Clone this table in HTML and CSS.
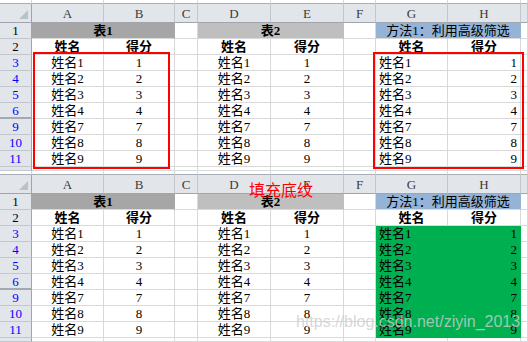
FILE: index.html
```html
<!DOCTYPE html>
<html lang="zh">
<head>
<meta charset="utf-8">
<link rel="stylesheet" href="styles.css">
</head>
<body>
<div class="shot">
  <div class="row strip"><div class="cell"></div><div class="cell"></div><div class="cell"></div><div class="cell"></div><div class="cell"></div><div class="cell"></div><div class="cell"></div><div class="cell"></div><div class="cell"></div><div class="cell"></div></div>
  <div class="row head">
    <div class="cell corner"><svg width="9" height="9" viewBox="0 0 9 9"><polygon points="9,0 9,9 0,9" fill="#bcc1c8"/></svg></div>
    <div class="cell ch">A</div><div class="cell ch">B</div><div class="cell ch">C</div><div class="cell ch">D</div><div class="cell ch">E</div><div class="cell ch">F</div><div class="cell ch">G</div><div class="cell ch">H</div><div class="cell ch"></div>
  </div>
  <div class="row data">
    <div class="cell rh">1</div>
    <div class="cell span2 t1 b">表1</div><div class="cell"></div>
    <div class="cell span2 t2 b">表2</div><div class="cell"></div>
    <div class="cell span2 t3">方法1：利用高级筛选</div><div class="cell"></div>
  </div>
  <div class="row data">
    <div class="cell rh">2</div>
    <div class="cell ctr b">姓名</div><div class="cell ctr b">得分</div><div class="cell"></div>
    <div class="cell ctr b">姓名</div><div class="cell ctr b">得分</div><div class="cell"></div>
    <div class="cell ctr b">姓名</div><div class="cell ctr b">得分</div><div class="cell"></div>
  </div>
  <div class="row data"><div class="cell rh f">3</div><div class="cell ctr">姓名1</div><div class="cell ctr">1</div><div class="cell"></div><div class="cell ctr">姓名1</div><div class="cell ctr">1</div><div class="cell"></div><div class="cell lft">姓名1</div><div class="cell rgt">1</div><div class="cell"></div></div>
  <div class="row data"><div class="cell rh f">4</div><div class="cell ctr">姓名2</div><div class="cell ctr">2</div><div class="cell"></div><div class="cell ctr">姓名2</div><div class="cell ctr">2</div><div class="cell"></div><div class="cell lft">姓名2</div><div class="cell rgt">2</div><div class="cell"></div></div>
  <div class="row data"><div class="cell rh f">5</div><div class="cell ctr">姓名3</div><div class="cell ctr">3</div><div class="cell"></div><div class="cell ctr">姓名3</div><div class="cell ctr">3</div><div class="cell"></div><div class="cell lft">姓名3</div><div class="cell rgt">3</div><div class="cell"></div></div>
  <div class="row data"><div class="cell rh f hid">6</div><div class="cell ctr">姓名4</div><div class="cell ctr">4</div><div class="cell"></div><div class="cell ctr">姓名4</div><div class="cell ctr">4</div><div class="cell"></div><div class="cell lft">姓名4</div><div class="cell rgt">4</div><div class="cell"></div></div>
  <div class="row data"><div class="cell rh f">9</div><div class="cell ctr">姓名7</div><div class="cell ctr">7</div><div class="cell"></div><div class="cell ctr">姓名7</div><div class="cell ctr">7</div><div class="cell"></div><div class="cell lft">姓名7</div><div class="cell rgt">7</div><div class="cell"></div></div>
  <div class="row data"><div class="cell rh f">10</div><div class="cell ctr">姓名8</div><div class="cell ctr">8</div><div class="cell"></div><div class="cell ctr">姓名8</div><div class="cell ctr">8</div><div class="cell"></div><div class="cell lft">姓名8</div><div class="cell rgt">8</div><div class="cell"></div></div>
  <div class="row data"><div class="cell rh f">11</div><div class="cell ctr">姓名9</div><div class="cell ctr">9</div><div class="cell"></div><div class="cell ctr">姓名9</div><div class="cell ctr">9</div><div class="cell"></div><div class="cell lft">姓名9</div><div class="cell rgt">9</div><div class="cell"></div></div>
  <div class="row tail"><div class="cell rh"></div><div class="cell"></div><div class="cell"></div><div class="cell"></div><div class="cell"></div><div class="cell"></div><div class="cell"></div><div class="cell"></div><div class="cell"></div><div class="cell"></div></div>
  <div class="mark mark-ab"></div>
  <div class="mark mark-gh"></div>
</div>

<div class="shot">
  <div class="row strip"><div class="cell"></div><div class="cell"></div><div class="cell"></div><div class="cell"></div><div class="cell"></div><div class="cell"></div><div class="cell"></div><div class="cell"></div><div class="cell"></div><div class="cell"></div></div>
  <div class="row head">
    <div class="cell corner"><svg width="9" height="9" viewBox="0 0 9 9"><polygon points="9,0 9,9 0,9" fill="#bcc1c8"/></svg></div>
    <div class="cell ch">A</div><div class="cell ch">B</div><div class="cell ch">C</div><div class="cell ch">D</div><div class="cell ch">E</div><div class="cell ch">F</div><div class="cell ch">G</div><div class="cell ch">H</div><div class="cell ch"></div>
  </div>
  <div class="row data">
    <div class="cell rh">1</div>
    <div class="cell span2 t1 b">表1</div><div class="cell"></div>
    <div class="cell span2 t2 b">表2</div><div class="cell"></div>
    <div class="cell span2 t3">方法1：利用高级筛选</div><div class="cell"></div>
  </div>
  <div class="row data">
    <div class="cell rh">2</div>
    <div class="cell ctr b">姓名</div><div class="cell ctr b">得分</div><div class="cell"></div>
    <div class="cell ctr b">姓名</div><div class="cell ctr b">得分</div><div class="cell"></div>
    <div class="cell ctr b">姓名</div><div class="cell ctr b">得分</div><div class="cell"></div>
  </div>
  <div class="row data"><div class="cell rh f">3</div><div class="cell ctr">姓名1</div><div class="cell ctr">1</div><div class="cell"></div><div class="cell ctr">姓名1</div><div class="cell ctr">1</div><div class="cell"></div><div class="cell lft grn">姓名1</div><div class="cell rgt grn">1</div><div class="cell"></div></div>
  <div class="row data"><div class="cell rh f">4</div><div class="cell ctr">姓名2</div><div class="cell ctr">2</div><div class="cell"></div><div class="cell ctr">姓名2</div><div class="cell ctr">2</div><div class="cell"></div><div class="cell lft grn">姓名2</div><div class="cell rgt grn">2</div><div class="cell"></div></div>
  <div class="row data"><div class="cell rh f">5</div><div class="cell ctr">姓名3</div><div class="cell ctr">3</div><div class="cell"></div><div class="cell ctr">姓名3</div><div class="cell ctr">3</div><div class="cell"></div><div class="cell lft grn">姓名3</div><div class="cell rgt grn">3</div><div class="cell"></div></div>
  <div class="row data"><div class="cell rh f hid">6</div><div class="cell ctr">姓名4</div><div class="cell ctr">4</div><div class="cell"></div><div class="cell ctr">姓名4</div><div class="cell ctr">4</div><div class="cell"></div><div class="cell lft grn">姓名4</div><div class="cell rgt grn">4</div><div class="cell"></div></div>
  <div class="row data"><div class="cell rh f">9</div><div class="cell ctr">姓名7</div><div class="cell ctr">7</div><div class="cell"></div><div class="cell ctr">姓名7</div><div class="cell ctr">7</div><div class="cell"></div><div class="cell lft grn">姓名7</div><div class="cell rgt grn">7</div><div class="cell"></div></div>
  <div class="row data"><div class="cell rh f">10</div><div class="cell ctr">姓名8</div><div class="cell ctr">8</div><div class="cell"></div><div class="cell ctr">姓名8</div><div class="cell ctr">8</div><div class="cell"></div><div class="cell lft grn">姓名8</div><div class="cell rgt grn">8</div><div class="cell"></div></div>
  <div class="row data"><div class="cell rh f">11</div><div class="cell ctr">姓名9</div><div class="cell ctr">9</div><div class="cell"></div><div class="cell ctr">姓名9</div><div class="cell ctr">9</div><div class="cell"></div><div class="cell lft grn">姓名9</div><div class="cell rgt grn">9</div><div class="cell"></div></div>
  <div class="row tail"><div class="cell rh"></div><div class="cell"></div><div class="cell"></div><div class="cell"></div><div class="cell"></div><div class="cell"></div><div class="cell"></div><div class="cell"></div><div class="cell"></div><div class="cell"></div></div>
  <div class="note">填充底纹</div>
  <div class="watermark">https://blog.csdn.net/ziyin_2013</div>
</div>
</body>
</html>
```

FILE: styles.css
```css
html, body {
  margin: 0;
  padding: 0;
  background: #ffffff;
}
body {
  width: 528px;
  height: 342px;
  overflow: hidden;
  font-family: "Liberation Serif", "Noto Sans CJK SC", serif;
  font-size: 13px;
  color: #000;
}
.shot {
  position: relative;
  height: 171px;
  overflow: hidden;
}
.row {
  display: grid;
  grid-template-columns: 32px 72px 71px 23px 73px 73px 32px 72px 73px 7px;
}
.strip { height: 4px; }
.head { height: 19px; }
.data { height: 16px; }
.tail { height: 4px; }

.cell {
  box-sizing: border-box;
  border-right: 1px solid #d9d9d9;
  border-bottom: 1px solid #d9d9d9;
  line-height: 16px;
  white-space: nowrap;
  overflow: hidden;
}
.strip .cell {
  border-bottom-color: #a9afb7;
}
.corner {
  background: #e2e6eb;
  border-right-color: #9ea5ae;
  border-bottom-color: #9ea5ae;
  display: flex;
  justify-content: flex-end;
  align-items: flex-end;
  padding: 0 3px 3px 0;
}
.ch {
  background: #e2e6eb;
  border-right-color: #c2c7ce;
  border-bottom-color: #9ea5ae;
  text-align: center;
  line-height: 20px;
  color: #3a3a3a;
}
.rh {
  background: #e2e6eb;
  border-right-color: #9ea5ae;
  border-bottom-color: #c2c7ce;
  text-align: center;
  line-height: 16px;
}
.rh.f { color: #0000ff; }
.rh.hid { border-bottom: 2px solid #a3a9b1; }

.span2 { grid-column: span 2; text-align: center; }
.t1 { background: #a6a6a6; border-right-color: #a6a6a6; }
.t2 { background: #bfbfbf; border-right-color: #bfbfbf; }
.t3 { background: #95b3d7; border-right-color: #95b3d7; }
.b { font-weight: bold; }
.ctr { text-align: center; }
.lft { text-align: left; padding-left: 3px; }
.rgt { text-align: right; padding-right: 3px; }
.grn {
  background: #00b050;
  border-color: #00b050;
}

.mark {
  position: absolute;
  top: 52px;
  height: 117px;
  box-sizing: border-box;
  border: 2px solid #ff0000;
}
.mark-ab { left: 33px; width: 137px; }
.mark-gh { left: 373px; width: 151px; }

.note {
  position: absolute;
  left: 249px;
  top: 10px;
  font-family: "Noto Sans CJK SC", sans-serif;
  font-size: 16px;
  line-height: 16px;
  color: #ff0000;
}
.watermark {
  position: absolute;
  left: 296px;
  top: 143px;
  font-family: "Liberation Sans", sans-serif;
  font-size: 16px;
  line-height: 16px;
  color: rgba(205, 205, 205, 0.8);
  white-space: nowrap;
}
```
